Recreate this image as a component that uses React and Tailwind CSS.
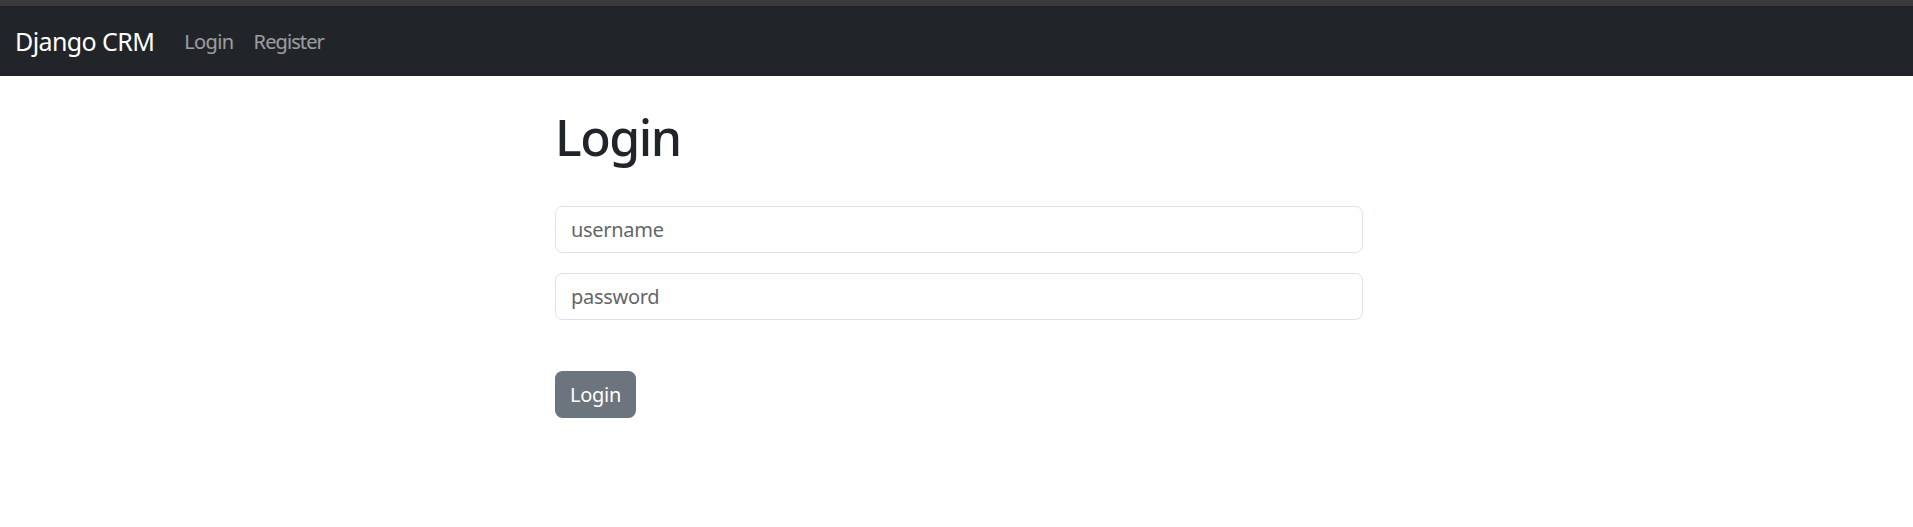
import React from 'react';

const font = { fontFamily: '"Noto Sans", "Open Sans", sans-serif' };

export default function App() {
  return (
    <div className="min-h-[527px] bg-white text-[#212529]" style={font}>
      <div className="h-[6px] bg-[#3b3b3b]" />
      <nav className="h-[70px] bg-[#212529] flex items-center px-[15px] pt-[2px]">
        <a className="text-white text-[25px] mr-[20px] tracking-[-0.6px]">Django CRM</a>
        <a className="text-white/55 text-[20px] px-[10px] tracking-[-0.6px]">Login</a>
        <a className="text-white/55 text-[20px] px-[10px] tracking-[-0.9px]">Register</a>
      </nav>

      <div className="w-[808px] ml-[555px] pt-[31px]">
        <h1 className="text-[50px] leading-[1.2] font-medium mb-[39px] tracking-[-1.5px]">Login</h1>
        <form>
          <input
            placeholder="username"
            className="block w-full h-[47px] px-[15px] mb-[20px] text-[20px] tracking-[-0.3px] border border-[#dee2e6] rounded-[7.5px] outline-none placeholder:text-[#63666a]"
          />
          <input
            type="password"
            placeholder="password"
            className="block w-full h-[47px] px-[15px] text-[20px] tracking-[-0.3px] border border-[#dee2e6] rounded-[7.5px] outline-none placeholder:text-[#63666a]"
          />
          <button
            type="button"
            className="mt-[51px] h-[47px] w-[81px] bg-[#6c757d] text-white text-[20px] tracking-[-0.3px] rounded-[7.5px]"
          >
            Login
          </button>
        </form>
      </div>
    </div>
  );
}
